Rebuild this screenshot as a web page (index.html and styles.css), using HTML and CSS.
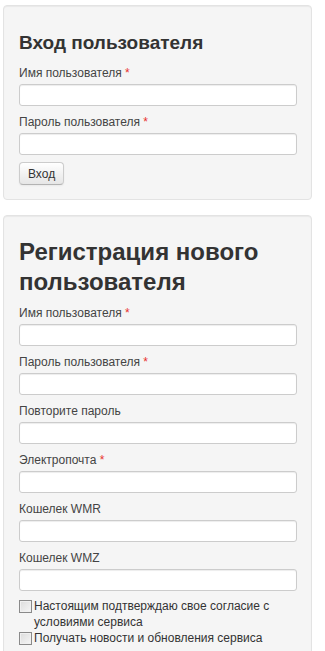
FILE: index.html
```html
<!DOCTYPE html>
<html>

<head>
  <meta charset="utf-8">
  <link rel="stylesheet" href="styles.css">
</head>

<body>
  <div class="well">
    <form class="login">
      <h3 class="title">Вход пользователя</h3>
      <label>Имя пользователя <span class="req">*</span></label>
      <input type="text">
      <label>Пароль пользователя <span class="req">*</span></label>
      <input type="password">
      <button class="btn" type="button">Вход</button>
    </form>
  </div>

  <div class="well">
    <form class="register">
      <h1 class="title-big">Регистрация нового пользователя</h1>
      <label>Имя пользователя <span class="req">*</span></label>
      <input type="text">
      <label>Пароль пользователя <span class="req">*</span></label>
      <input type="password">
      <label>Повторите пароль</label>
      <input type="password">
      <label>Электропочта <span class="req">*</span></label>
      <input type="text">
      <label>Кошелек WMR</label>
      <input type="text">
      <label>Кошелек WMZ</label>
      <input type="text">

      <div class="check">
        <span class="box"></span>
        <span>Настоящим подтверждаю свое согласие с условиями сервиса</span>
      </div>
      <div class="check">
        <span class="box"></span>
        <span>Получать новости и обновления сервиса</span>
      </div>
    </form>
  </div>
</body>

</html>
```

FILE: styles.css
```css
body {
  margin: 0;
  padding: 5px 0 20px 3px;
  font-family: "Liberation Sans", Arial, sans-serif;
  font-size: 12px;
  color: #333;
}

.well {
  box-sizing: border-box;
  width: 309px;
  padding: 15px 14px 14px 15px;
  margin-bottom: 15px;
  background-color: #f5f5f5;
  border: 1px solid #e3e3e3;
  border-radius: 4px;
  box-shadow: inset 0 1px 1px rgba(0, 0, 0, 0.05);
}

form {
  margin: 0;
}

.title {
  margin: 10px 0 9px 0;
  font-size: 19px;
  line-height: 24px;
  font-weight: bold;
  color: #333;
}

.title-big {
  margin: 6px 0 7px 0;
  font-size: 24px;
  line-height: 30px;
  font-weight: bold;
  color: #333;
}

label {
  display: block;
  line-height: 18px;
  margin-bottom: 2px;
  color: #444;
}

.req {
  color: #e9322d;
}

input {
  display: block;
  box-sizing: border-box;
  width: 100%;
  height: 22px;
  margin: 0 0 7px 0;
  padding: 2px 5px;
  background: #fff;
  border: 1px solid #ccc;
  border-radius: 3px;
  box-shadow: inset 0 1px 1px rgba(0, 0, 0, 0.075);
  font: inherit;
}

.btn {
  display: block;
  margin-top: 1px;
  height: 23px;
  padding: 0 8px;
  font: inherit;
  font-size: 12px;
  color: #333;
  background: linear-gradient(#ffffff, #e6e6e6);
  border: 1px solid #ccc;
  border-bottom-color: #b3b3b3;
  border-radius: 4px;
  box-shadow: inset 0 1px 0 rgba(255, 255, 255, 0.2), 0 1px 2px rgba(0, 0, 0, 0.05);
}

.check {
  display: flex;
  align-items: flex-start;
  gap: 2px;
  line-height: 16px;
  margin-top: 3px;
  color: #333;
}

.check + .check {
  margin-top: 0;
}

.box {
  flex: none;
  box-sizing: border-box;
  width: 13px;
  height: 13px;
  margin-top: 2px;
  border: 1px solid #8a8a8a;
  background: linear-gradient(135deg, #dcdcdc, #f6f6f6);
  box-shadow: inset 0 0 0 1px #f0f0f0;
}
```
